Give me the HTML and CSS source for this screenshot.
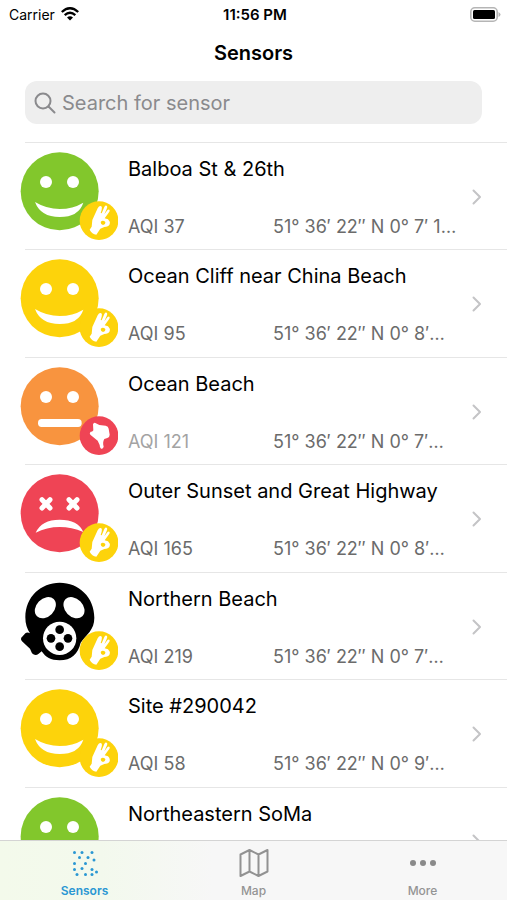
FILE: index.html
```html
<!DOCTYPE html>
<html lang="en">
<head>
<meta charset="utf-8">
<meta name="viewport" content="width=device-width, initial-scale=1">
<title>Sensors</title>
<link rel="stylesheet" href="styles.css">
</head>
<body>
<svg class="defs" aria-hidden="true">
  <defs>
    <symbol id="smile" viewBox="30 36 294 267">
      <circle cx="149" cy="154" r="117"/>
      <circle cx="108" cy="126" r="18" fill="#fff"/>
      <circle cx="189" cy="126" r="18" fill="#fff"/>
      <path fill="#fff" d="M75 186Q110 207 149 207Q188 207 220 188Q206 231 149 231Q92 231 75 186Z"/>
    </symbol>
    <symbol id="neutral" viewBox="30 36 294 267">
      <circle cx="149" cy="154" r="117"/>
      <circle cx="108" cy="126" r="18" fill="#fff"/>
      <circle cx="189" cy="126" r="18" fill="#fff"/>
      <rect x="84" y="192" width="131" height="24" rx="11" fill="#fff"/>
    </symbol>
    <symbol id="sick" viewBox="30 36 294 267">
      <circle cx="149" cy="154" r="117"/>
      <path stroke="#fff" stroke-width="15" stroke-linecap="round" d="M96 113L120 138M120 113L96 138M177 113L201 138M201 113L177 138"/>
      <path fill="#fff" d="M77 212Q95 173 149 173Q204 173 220 210Q185 195 149 195Q110 195 77 212Z"/>
    </symbol>
    <symbol id="mask" viewBox="30 36 294 267">
      <path d="M46 142C46 80 93 38 149 38C207 38 253 82 253 143C253 180 230 192 212 218C204 252 184 271 149 271C122 271 107 262 95 244L86 251Q76 259 66 250L60 236L36 214Q29 206 38 199L46 190Q52 185 60 190Q46 170 46 142Z"/>
      <ellipse cx="106" cy="113" rx="27" ry="36" transform="rotate(44 106 113)" fill="#fff"/>
      <ellipse cx="192" cy="113" rx="27" ry="36" transform="rotate(-44 192 113)" fill="#fff"/>
      <circle cx="149" cy="205" r="50" fill="#fff"/>
      <circle cx="149" cy="179" r="13"/><circle cx="149" cy="230" r="13"/>
      <circle cx="123" cy="205" r="13"/><circle cx="174" cy="205" r="13"/>
    </symbol>
    <symbol id="ok" viewBox="30 36 294 267">
      <circle cx="267" cy="242" r="58" fill="#fdd30b"/>
      <path fill="#fff" fill-rule="evenodd" d="M239 269L245 260L247 240L263 205Q268 196 274 199Q277 202 275 209L272 219L275 220L283 201Q287 194 291 198Q293 201 290 207L283 223L292 211Q297 206 299 211Q300 214 295 220L284 235L294 238Q301 244 299 253Q295 261 283 261L271 266L259 284Q246 282 239 269ZM272 246Q278 238 286 246Q287 253 279 255Q272 253 272 246Z"/>
    </symbol>
    <symbol id="down" viewBox="30 36 294 267">
      <circle cx="267" cy="242" r="58" fill="#ef4455"/>
      <path fill="#fff" d="M249 208Q251 202 256 204L268 210L287 212Q295 213 296 221L299 239Q299 247 292 249L283 252Q277 262 281 275Q279 283 273 281Q269 279 269 270L263 257L241 239Q237 235 242 230Q248 231 250 226Z"/>
    </symbol>
    <symbol id="chevron" viewBox="0 0 10 16">
      <path d="M1.500 1.500L8 8L1.500 14.500" fill="none" stroke="#c4c4c6" stroke-width="2" stroke-linecap="round" stroke-linejoin="round"/>
    </symbol>
  </defs>
</svg>

<header class="header">
  <div class="status">
    <span class="carrier">Carrier
      <svg class="wifi" viewBox="0 0 18 14" aria-hidden="true">
        <g fill="none" stroke="#000" stroke-width="2.300">
          <path d="M.8 5Q9-2.600 17.200 5"/>
          <path d="M3.700 8.200Q9 3.300 14.300 8.200"/>
        </g>
        <path d="M6 10.500Q9 8 12 10.500L9 13.500Z"/>
      </svg>
    </span>
    <time class="clock">11:56 PM</time>
    <svg class="battery" viewBox="0 0 31 15" aria-hidden="true">
      <rect x=".8" y=".8" width="26.400" height="13.400" rx="4" fill="#fff" stroke="#b5b5b5" stroke-width="1.600"/>
      <rect x="3" y="3" width="22" height="9" rx="1.500"/>
      <path d="M28.500 5Q30.500 6 30.500 7.500T28.500 10Z" fill="#b5b5b5"/>
    </svg>
  </div>
  <h1 class="title">Sensors</h1>
  <label class="search">
    <svg class="search-icon" viewBox="0 0 22 22" aria-hidden="true">
      <g fill="none" stroke="#8a8a8d" stroke-width="2" stroke-linecap="round"><circle cx="9" cy="9" r="7.500"/><path d="M14.500 14.500L20.500 20.500"/></g>
    </svg>
    <input class="search-input" type="search" placeholder="Search for sensor" aria-label="Search for sensor">
  </label>
</header>

<main class="content">
  <ul class="list">
    <li><a class="row" href="#"><svg class="avatar green" aria-hidden="true"><use href="#smile"/><use href="#ok"/></svg>
      <span class="name">Balboa St &amp; 26th</span><span class="aqi">AQI 37</span><span class="place">51° 36′ 22″ N 0° 7′ 1…</span><svg class="chevron" aria-hidden="true"><use href="#chevron"/></svg></a></li>
    <li><a class="row" href="#"><svg class="avatar yellow" aria-hidden="true"><use href="#smile"/><use href="#ok"/></svg>
      <span class="name">Ocean Cliff near China Beach</span><span class="aqi">AQI 95</span><span class="place">51° 36′ 22″ N 0° 8′…</span><svg class="chevron" aria-hidden="true"><use href="#chevron"/></svg></a></li>
    <li><a class="row" href="#"><svg class="avatar orange" aria-hidden="true"><use href="#neutral"/><use href="#down"/></svg>
      <span class="name">Ocean Beach</span><span class="aqi stale">AQI 121</span><span class="place">51° 36′ 22″ N 0° 7′…</span><svg class="chevron" aria-hidden="true"><use href="#chevron"/></svg></a></li>
    <li><a class="row" href="#"><svg class="avatar red" aria-hidden="true"><use href="#sick"/><use href="#ok"/></svg>
      <span class="name">Outer Sunset and Great Highway</span><span class="aqi">AQI 165</span><span class="place">51° 36′ 22″ N 0° 8′…</span><svg class="chevron" aria-hidden="true"><use href="#chevron"/></svg></a></li>
    <li><a class="row" href="#"><svg class="avatar" aria-hidden="true"><use href="#mask"/><use href="#ok"/></svg>
      <span class="name">Northern Beach</span><span class="aqi">AQI 219</span><span class="place">51° 36′ 22″ N 0° 7′…</span><svg class="chevron" aria-hidden="true"><use href="#chevron"/></svg></a></li>
    <li><a class="row" href="#"><svg class="avatar yellow" aria-hidden="true"><use href="#smile"/><use href="#ok"/></svg>
      <span class="name">Site #290042</span><span class="aqi">AQI 58</span><span class="place">51° 36′ 22″ N 0° 9′…</span><svg class="chevron" aria-hidden="true"><use href="#chevron"/></svg></a></li>
    <li><a class="row" href="#"><svg class="avatar green" aria-hidden="true"><use href="#smile"/></svg>
      <span class="name">Northeastern SoMa</span><svg class="chevron" aria-hidden="true"><use href="#chevron"/></svg></a></li>
  </ul>
</main>

<nav class="tabs">
  <a class="tab active" href="#" aria-current="page">
    <svg class="tab-icon" viewBox="0 0 30 30" aria-hidden="true">
      <g fill="#2a97d3"><circle cx="4.500" cy="4.500" r="1.500"/><circle cx="12" cy="4.500" r="1.500"/><circle cx="22" cy="4.500" r="1.500"/><circle cx="9.500" cy="9.500" r="1.500"/><circle cx="18" cy="9.500" r="1.500"/><circle cx="24" cy="12" r="1.500"/><circle cx="4.500" cy="15.500" r="1.500"/><circle cx="15.500" cy="15.500" r="1.500"/><circle cx="4.500" cy="21.500" r="1.500"/><circle cx="12" cy="20.500" r="1.500"/><circle cx="22" cy="21.500" r="1.500"/><circle cx="26.500" cy="24" r="1.500"/><circle cx="7" cy="26.500" r="1.500"/><circle cx="15.500" cy="26.500" r="1.500"/><circle cx="22" cy="26.500" r="1.500"/></g>
    </svg>Sensors</a>
  <a class="tab" href="#">
    <svg class="tab-icon" viewBox="0 0 30 30" aria-hidden="true">
      <path fill="none" stroke="#929292" stroke-width="2" stroke-linejoin="round" d="M1.500 6.500L10.500 2L19.500 6.500L28.500 2V23.500L19.500 28L10.500 23.500L1.500 28ZM10.500 2V23.500M19.500 6.500V28"/>
    </svg>Map</a>
  <a class="tab" href="#">
    <svg class="tab-icon" viewBox="0 0 30 30" aria-hidden="true">
      <g fill="#8a8a8a"><circle cx="5" cy="15" r="3"/><circle cx="15" cy="15" r="3"/><circle cx="25" cy="15" r="3"/></g>
    </svg>More</a>
</nav>
</body>
</html>
```
FILE: styles.css
```css
* { box-sizing: border-box; }

body {
  margin: 0;
  height: 100vh;
  display: flex;
  flex-direction: column;
  background: #fff;
  color: #000;
  font-family: Inter, "Liberation Sans", sans-serif;
}

a { color: inherit; text-decoration: none; }

.defs { position: absolute; width: 0; height: 0; }

.header { flex: none; padding-bottom: 18px; }

.status {
  display: grid;
  grid-template-columns: 1fr auto 1fr;
  align-items: center;
  height: 28px;
  padding: 0 6px 0 9px;
  font-size: 14px;
}
.carrier { display: flex; align-items: center; gap: 6px; }
.wifi { width: 18px; height: 14px; }
.clock { font-size: 15px; font-weight: 600; }
.battery { width: 31px; height: 15px; justify-self: end; }

.title {
  margin: 0;
  height: 53px;
  font-size: 20px;
  font-weight: 600;
  line-height: 50px;
  text-align: center;
}

.search {
  display: flex;
  align-items: center;
  gap: 6px;
  height: 43px;
  margin: 0 25px;
  padding: 0 9px;
  border-radius: 12px;
  background: #eee;
}
.search-icon { flex: none; width: 22px; height: 22px; }
.search-input {
  flex: 1;
  min-width: 0;
  padding: 0;
  border: 0;
  outline: 0;
  background: none;
  font: inherit;
  font-size: 20px;
}
.search-input::placeholder { color: #8a8a8d; opacity: 1; }

.content {
  flex: 1;
  min-height: 0;
  overflow: auto;
  scrollbar-width: none;
}
.list { margin: 0; padding: 0; list-style: none; }

.list li {
  margin-left: 25px;
  padding-bottom: 17px;
  border-top: 1px solid #e6e6e6;
}
.list li:nth-child(even) { padding-bottom: 18px; }

.row {
  display: grid;
  grid-template-columns: 98px 145px 1fr 10px;
  grid-template-rows: 52px 37px;
  margin-left: -5px;
  padding-right: 25px;
}
.avatar { grid-row: 1 / 3; width: 98px; height: 89px; margin-top: 9px; }
.green { fill: #82c72c; }
.yellow { fill: #fdd30b; }
.orange { fill: #f8943f; }
.red { fill: #ef4455; }

.name {
  grid-column: 2 / 4;
  padding-left: 10px;
  font-size: 20px;
  line-height: 53px;
  white-space: nowrap;
}
.aqi, .place {
  grid-row: 2;
  padding-left: 10px;
  color: #6b6b6b;
  font-size: 18px;
  line-height: 64px;
  white-space: nowrap;
}
.stale { color: #a3a3a3; }
.chevron { grid-column: 4; grid-row: 1 / 3; width: 10px; height: 16px; margin-top: 46px; }

.tabs {
  flex: none;
  display: grid;
  grid-template-columns: repeat(3, 1fr);
  height: 60px;
  border-top: 1px solid #d4d4d4;
  background: linear-gradient(90deg, #f3faeb, #f3f9ed 20%, #f7f7f7 42%);
}
.tab {
  display: flex;
  flex-direction: column;
  align-items: center;
  padding-top: 7px;
  color: #949494;
  font-size: 12px;
  font-weight: 500;
  line-height: 16px;
  gap: 5px;
}
.tab-icon { width: 30px; height: 30px; }
.active { color: #2a97d3; font-weight: 600; }
```
